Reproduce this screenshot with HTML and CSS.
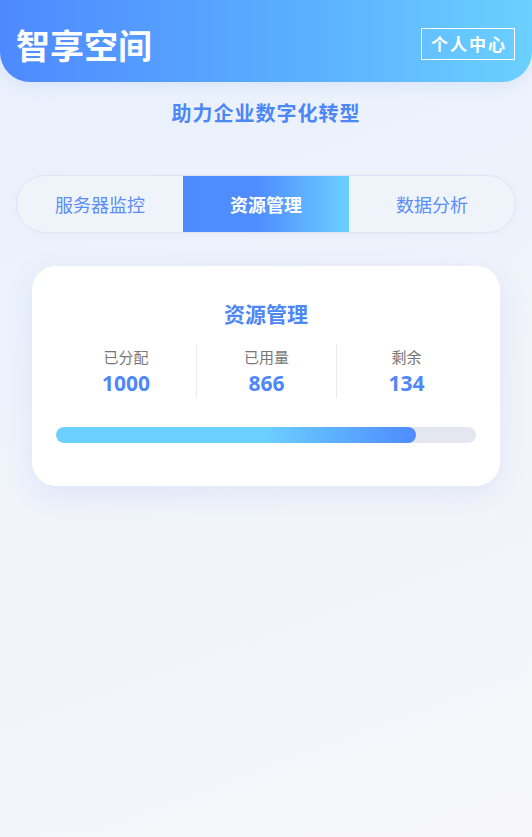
FILE: index.html
```html
<!DOCTYPE html>
<html lang="zh-CN">
<head>
<meta charset="utf-8">
<title>智享空间</title>
<link rel="stylesheet" href="styles.css">
</head>
<body>
<div class="page">
  <header class="header">
    <h1 class="brand">智享空间</h1>
    <a class="profile-btn">个人中心</a>
  </header>
  <p class="slogan">助力企业数字化转型</p>
  <nav class="tabs">
    <div class="tab">服务器监控</div>
    <div class="tab active">资源管理</div>
    <div class="tab">数据分析</div>
  </nav>
  <section class="card">
    <h2 class="card-title">资源管理</h2>
    <div class="stats">
      <div class="stat">
        <div class="stat-label">已分配</div>
        <div class="stat-value">1000</div>
      </div>
      <div class="stat">
        <div class="stat-label">已用量</div>
        <div class="stat-value">866</div>
      </div>
      <div class="stat">
        <div class="stat-label">剩余</div>
        <div class="stat-value">134</div>
      </div>
    </div>
    <div class="progress">
      <div class="progress-fill" style="width: 85.7%"></div>
    </div>
  </section>
</div>
</body>
</html>
```
FILE: styles.css
```css
* { box-sizing: border-box; }
html, body { margin: 0; padding: 0; }
body {
  width: 532px;
  min-height: 837px;
  font-family: "Noto Sans", "Noto Sans CJK SC", sans-serif;
  background: linear-gradient(160deg, #e9f0fd 0%, #f1f4fa 60%, #f6f6f9 100%);
}
.page {
  min-height: 837px;
  display: flex;
  flex-direction: column;
}
.header {
  height: 82px;
  padding: 6px 17px 0 16px;
  display: flex;
  align-items: center;
  justify-content: space-between;
  background: linear-gradient(90deg, #4e89ff 0%, #5aaeff 55%, #6bd0ff 100%);
  border-radius: 0 0 30px 30px;
  box-shadow: 0 4px 14px rgba(90, 140, 230, 0.12);
}
.brand {
  margin: 2px 0 0 0;
  font-family: "Noto Sans CJK SC", sans-serif;
  font-size: 34px;
  font-weight: 700;
  color: #ffffff;
  line-height: 40px;
  letter-spacing: 0;
}
.profile-btn {
  display: block;
  height: 32px;
  margin-top: -1px;
  padding: 0 7px 0 9px;
  border: 1px solid #ffffff;
  color: #ffffff;
  font-family: "Noto Sans CJK SC", serif;
  font-size: 17px;
  font-weight: 700;
  line-height: 30px;
  letter-spacing: 2px;
}
.slogan {
  margin: 17px 0 0 0;
  text-align: center;
  font-family: "Noto Sans CJK SC", sans-serif;
  font-size: 20px;
  font-weight: 700;
  letter-spacing: 1px;
  line-height: 28px;
  color: #4d86f5;
}
.tabs {
  margin: 48px 16px 0 16px;
  height: 58px;
  display: flex;
  border: 1px solid #dde5f4;
  border-radius: 29px;
  background: #eff3fa;
  overflow: hidden;
  box-shadow: 0 2px 8px rgba(120, 150, 210, 0.06);
}
.tab {
  flex: 1;
  display: flex;
  align-items: center;
  justify-content: center;
  font-family: "Noto Sans CJK SC", sans-serif;
  font-size: 18px;
  color: #5a8ef8;
}
.tab.active {
  color: #ffffff;
  font-weight: 700;
  background: linear-gradient(90deg, #4e8bff 0%, #4f8dff 45%, #6bd0ff 100%);
}
.card {
  margin: 33px 32px 0 32px;
  padding: 32px 24px 43px 24px;
  background: #ffffff;
  border-radius: 24px;
  box-shadow: 0 8px 28px rgba(90, 130, 220, 0.12);
}
.card-title {
  margin: 0;
  text-align: center;
  font-family: "Noto Sans CJK SC", sans-serif;
  font-size: 21px;
  font-weight: 700;
  line-height: 30px;
  color: #4d86f5;
}
.stats {
  margin-top: 16px;
  display: grid;
  grid-template-columns: 1fr 1fr 1fr;
}
.stat {
  text-align: center;
  height: 54px;
}
.stat + .stat {
  border-left: 1px solid #e8ebf0;
}
.stat-label {
  font-family: "Noto Sans CJK SC", sans-serif;
  font-size: 15px;
  line-height: 25px;
  color: #777777;
}
.stat-value {
  font-family: "Open Sans", "Noto Sans", sans-serif;
  font-size: 21px;
  font-weight: 700;
  line-height: 29px;
  color: #4f87f7;
}
.progress {
  margin-top: 29px;
  height: 16px;
  border-radius: 8px;
  background: #e4e7ef;
  overflow: hidden;
}
.progress-fill {
  height: 100%;
  border-radius: 8px;
  background: linear-gradient(90deg, #6bcfff 0%, #6bcfff 58%, #4e8bff 100%);
}
```
